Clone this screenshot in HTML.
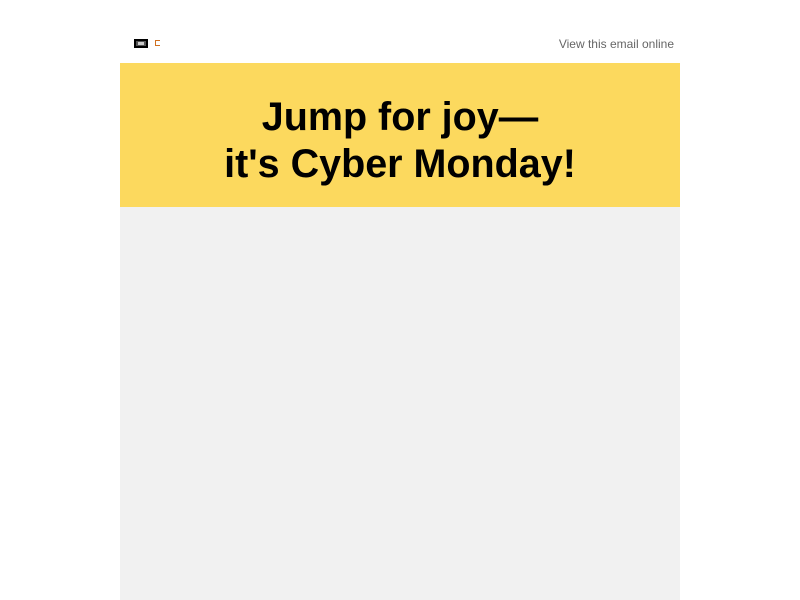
<!DOCTYPE html>
<html><head><meta charset="utf-8"><style>
html,body{margin:0;padding:0;background:#fff;width:800px;height:600px;overflow:hidden;font-family:"Liberation Sans",sans-serif;}
.top{position:absolute;left:120px;top:0;width:560px;height:63px;}
.i1{position:absolute;left:14px;top:39px;width:10px;height:5px;border:2px solid #000;background:#555;box-sizing:content-box;}
.i1 i{position:absolute;left:2px;top:1px;width:6px;height:3px;background:#ccc;}
.i2{position:absolute;left:35px;top:40px;width:4px;height:4px;border:1px solid #d07020;border-right:none;}
.view{position:absolute;right:6px;top:37px;font-size:12px;color:#666;}
.hero{position:absolute;left:120px;top:63px;width:560px;height:144px;background:#FCD95E;text-align:center;}
.hero h1{margin:0;padding-top:31px;font-size:39.5px;line-height:47px;font-weight:bold;color:#000;}
.gray{position:absolute;left:120px;top:207px;width:560px;height:393px;background:#F1F1F1;}
</style></head><body>
<div class="top"><div class="i1"><i></i></div><div class="i2"></div><div class="view">View this email online</div></div>
<div class="hero"><h1>Jump for joy—<br>it's Cyber Monday!</h1></div>
<div class="gray"></div>
</body></html>
